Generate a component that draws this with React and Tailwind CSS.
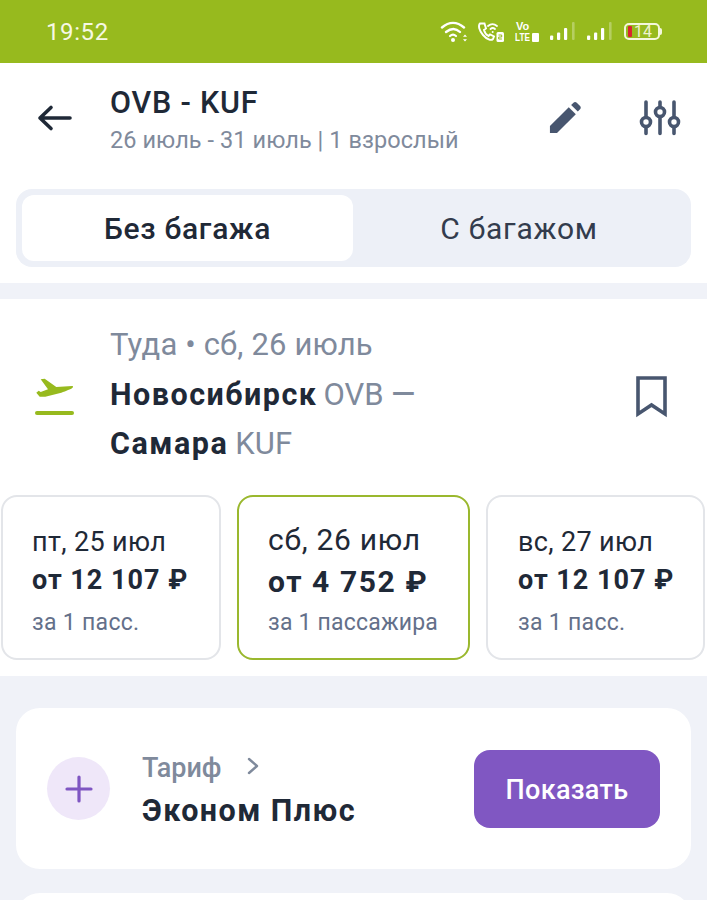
import React from "react";

const font = { fontFamily: "Roboto, 'Noto Sans', sans-serif" };

function SignalBars({ className }) {
  return (
    <svg width="26" height="22" viewBox="0 0 26 22" className={className} fill="#fff">
      <rect x="0" y="14.500" width="3.200" height="4.500" rx="1" />
      <rect x="7" y="11.500" width="3.200" height="7.500" rx="1" />
      <rect x="14" y="7" width="3.200" height="12" rx="1" />
      <rect x="22" y="1" width="2.600" height="18" rx="1" opacity="0.3" />
    </svg>
  );
}

function StatusIcons() {
  return (
    <div className="flex items-center h-full">
      {/* wifi with up/down activity arrows */}
      <svg width="28" height="24" viewBox="0 0 28 24" fill="none" stroke="#fff" strokeLinecap="round">
        <path d="M2 7.500C9 1.500 17 1.500 24 7.500" strokeWidth="2.400" />
        <path d="M6 12c5-4 10-4 14 0" strokeWidth="2.400" />
        <path d="M10 16c2-1.800 4-1.800 6 0" strokeWidth="2.200" />
        <circle cx="13" cy="20" r="2" fill="#fff" stroke="none" />
        <path d="M25 14.500l-2 2.200h4zM25 21.500l-2-2.200h4z" fill="#fff" stroke="none" />
      </svg>
      {/* wifi calling handset with SIM number */}
      <svg width="28" height="24" viewBox="0 0 28 24" className="ml-[9px]" fill="none" stroke="#fff" strokeWidth="1.900" strokeLinecap="round">
        <path d="M3 3.500c-2 2-1 7 3 11.500s8 6 10 4l1-2.500-4-2-1.500 1.500c-2-1-4-4-4.500-6l2-1.500L7.500 3.500z" />
        <path d="M11 6c3-2.500 6-2.500 9 0" />
        <path d="M13.500 9c1.500-1.200 3-1.200 4.500 0" />
        <circle cx="15.700" cy="12" r="1" fill="#fff" stroke="none" />
        <rect x="19.500" y="12" width="7.500" height="10" rx="1.500" fill="#fff" stroke="none" />
        <path d="M21.500 15h3.200v2h-3v2h3.200" stroke="#97ba1e" strokeWidth="1" strokeLinecap="butt" />
      </svg>
      {/* VoLTE badge */}
      <div className="ml-[10px] w-[26px] flex flex-col text-white font-bold text-[11px] leading-[11px]" style={{ fontFamily: "'Liberation Sans', sans-serif" }}>
        <span className="pl-[1px]">Vo</span>
        <div className="flex items-center">
          <span className="w-[16px] inline-block origin-left scale-x-[0.75] whitespace-nowrap">LTE</span>
          <div className="ml-[1px] w-[7px] h-[9px] bg-white rounded-[1px]" />
        </div>
      </div>
      <SignalBars className="ml-[9px]" />
      <SignalBars className="ml-[11px]" />
      {/* battery */}
      <div className="ml-[11px] flex items-center">
        <div className="relative w-[36px] h-[17px] rounded-[5px] border-2 border-[#f4f7dc] flex items-center">
          <div className="absolute left-[2px] top-[1px] bottom-[1px] w-[4px] bg-[#d9232e] rounded-[1px]" />
          <span className="pl-[8px] text-[16px] leading-none text-[#eef3cf]" style={font}>14</span>
        </div>
        <div className="w-[2px] h-[7px] bg-[#f4f7dc] rounded-r-sm" />
      </div>
    </div>
  );
}

function DayCard({ date, price, note, active, side }) {
  if (active) {
    return (
      <div className="w-[233px] h-[165px] shrink-0 rounded-[16px] border-2 border-[#9ab82e] bg-white pl-[29px] pt-[25px]">
        <div className="text-[30px] leading-[36px] tracking-[0.7px] text-[#1f2937]">{date}</div>
        <div className="mt-[6px] text-[30px] leading-[36px] font-bold text-[#1f2937] tracking-[1.6px] whitespace-nowrap">{price}</div>
        <div className="mt-[7px] text-[23px] leading-[32px] text-[#64708a] tracking-[0.2px] whitespace-nowrap">{note}</div>
      </div>
    );
  }
  return (
    <div className={`h-[165px] shrink-0 rounded-[16px] border-2 border-[#e3e5e9] bg-white pt-[28px] ${side === "left" ? "w-[220px] pl-[29px]" : "w-[219px] pl-[30px]"}`}>
      <div className="text-[27px] leading-[34px] tracking-[0.35px] text-[#1f2937]">{date}</div>
      <div className="mt-[4px] text-[27px] leading-[34px] font-bold text-[#1f2937] tracking-[1px] whitespace-nowrap">{price}</div>
      <div className="mt-[11px] text-[23px] leading-[30px] text-[#64708a] tracking-[0.3px] whitespace-nowrap">{note}</div>
    </div>
  );
}

export default function App() {
  return (
    <div className="w-[707px] h-[900px] overflow-hidden bg-[#f0f2f8]" style={font}>
      {/* status bar */}
      <div className="h-[63px] bg-[#97ba1e] flex items-center justify-between pl-[46px] pr-[45px]">
        <span className="text-[24px] text-[#f6f8e4] tracking-[0.6px]">19:52</span>
        <StatusIcons />
      </div>

      {/* route header and baggage switch */}
      <div className="h-[220px] bg-white">
        <div className="h-[126px] flex items-start">
          <svg width="36" height="28" viewBox="0 0 36 28" className="ml-[37px] mt-[41px] shrink-0" fill="none" stroke="#1f2937" strokeWidth="3.600" strokeLinecap="round" strokeLinejoin="round">
            <path d="M33 14H3M14 3.500 3 14l11 10.500" />
          </svg>
          <div className="ml-[37px] pt-[22px] flex-1">
            <div className="text-[30.500px] leading-[36px] font-medium text-[#1f2937] tracking-[0.8px]">OVB - KUF</div>
            <div className="mt-[3px] text-[23.500px] leading-[32px] text-[#7f8a9c] tracking-[0.07px]">26 июль - 31 июль | 1 взрослый</div>
          </div>
          <svg width="32" height="32" viewBox="0 0 34 34" className="mt-[39px] shrink-0" fill="#48566f">
            <path d="M1 33v-7.500L21 5.500l7.500 7.500L8.500 33z" />
            <path d="M23.500 3.200 26 .8c1-1 2.500-1 3.500 0l3.500 3.500c1 1 1 2.500 0 3.500l-2.400 2.400z" />
          </svg>
          <svg width="42" height="38" viewBox="0 0 42 38" className="ml-[58px] mr-[26px] mt-[36px] shrink-0" fill="none" stroke="#48566f" strokeLinecap="round">
            <path d="M7 3v31.500M21 3v31.500M35 3v31.500" strokeWidth="3.600" />
            <circle cx="7" cy="23" r="4.500" fill="#fff" strokeWidth="3.600" />
            <circle cx="21" cy="13" r="4.500" fill="#fff" strokeWidth="3.600" />
            <circle cx="35" cy="23" r="4.500" fill="#fff" strokeWidth="3.600" />
          </svg>
        </div>
        <div className="mx-[16px] h-[78px] rounded-[16px] bg-[#edf0f7] p-[6px] flex">
          <div className="w-[331px] h-[66px] rounded-[12px] bg-white flex items-center justify-center text-[30px] tracking-[0.7px] font-medium text-[#1f2937]">Без багажа</div>
          <div className="flex-1 flex items-center justify-center text-[30px] tracking-[0.75px] text-[#333c4d]">С багажом</div>
        </div>
      </div>

      {/* outbound flight */}
      <div className="mt-[16px] h-[377px] bg-white">
        <div className="h-[196px] flex items-start">
          <svg width="42" height="40" viewBox="0 0 42 40" className="ml-[34px] mt-[78px] shrink-0" fill="#97ba1e">
            <path d="M38.300 9 22.300 10 10.700 1.700 6.700 2.300 14 12.300 6.700 15 4.700 13.700 2.300 15.700 5.700 19.700 11.300 19.700 27.300 15.700C32 14 37 12 38.300 11 39.300 10 39.300 9 38.300 9z" />
            <rect x="1" y="34" width="39" height="4" rx="2" />
          </svg>
          <div className="ml-[34px] w-[330px] pt-[27px] shrink-0">
            <div className="text-[31px] leading-[38px] tracking-[0.15px] text-[#7f8a9c]">Туда • сб, 26 июль</div>
            <div className="mt-[12px] text-[30.500px] leading-[38px] font-bold text-[#1f2937] tracking-[1.5px]">
              Новосибирск <span className="-ml-[3px] text-[31px] font-normal text-[#7f8a9c] tracking-normal">OVB <span className="font-medium">—</span></span>
            </div>
            <div className="mt-[11px] text-[30.500px] leading-[38px] font-bold text-[#1f2937] tracking-[1.5px]">
              Самара <span className="-ml-[2px] text-[31px] font-normal text-[#7f8a9c] tracking-normal">KUF</span>
            </div>
          </div>
          <svg width="34" height="44" viewBox="0 0 34 44" className="ml-[195px] mt-[76px] shrink-0" fill="none" stroke="#48566f" strokeWidth="3.600" strokeLinejoin="miter">
            <path d="M3 3h27v36l-13.500-9L3 39z" />
          </svg>
        </div>
        <div className="pl-[1px] flex gap-[16px]">
          <DayCard date="пт, 25 июл" price="от 12 107 ₽" note="за 1 пасс." side="left" />
          <DayCard date="сб, 26 июл" price="от 4 752 ₽" note="за 1 пассажира" active />
          <DayCard date="вс, 27 июл" price="от 12 107 ₽" note="за 1 пасс." />
        </div>
      </div>

      {/* fare */}
      <div className="mt-[32px] mx-[16px] h-[161px] rounded-[24px] bg-white flex items-center pl-[31px] pr-[31px]">
        <div className="w-[63px] h-[63px] rounded-full bg-[#efe7f9] flex items-center justify-center shrink-0">
          <svg width="30" height="30" viewBox="0 0 30 30" fill="none" stroke="#7f56c2" strokeWidth="3.200" strokeLinecap="round">
            <path d="M15 3v24M3 15h24" />
          </svg>
        </div>
        <div className="ml-[32px] flex-1 pt-[2px]">
          <div className="flex items-center">
            <span className="text-[27px] leading-[36px] font-medium text-[#7f8a9c]">Тариф</span>
            <svg width="14" height="18" viewBox="0 0 14 18" className="ml-[24px] mb-[4px]" fill="none" stroke="#7f8a9c" strokeWidth="2.400" strokeLinecap="round" strokeLinejoin="round">
              <path d="M3 2l8 7-8 7" />
            </svg>
          </div>
          <div className="mt-[7px] text-[30.500px] leading-[36px] font-bold text-[#1f2937] tracking-[1.45px] whitespace-nowrap">Эконом Плюс</div>
        </div>
        <div className="w-[186px] h-[78px] shrink-0 rounded-[16px] bg-[#8057c2] flex items-center justify-center pt-[4px] text-[27px] font-medium text-white tracking-[0.3px]">Показать</div>
      </div>

      {/* next card peeks in at the fold */}
      <div className="mt-[24px] mx-[16px] h-[40px] rounded-t-[24px] bg-white" />
    </div>
  );
}
